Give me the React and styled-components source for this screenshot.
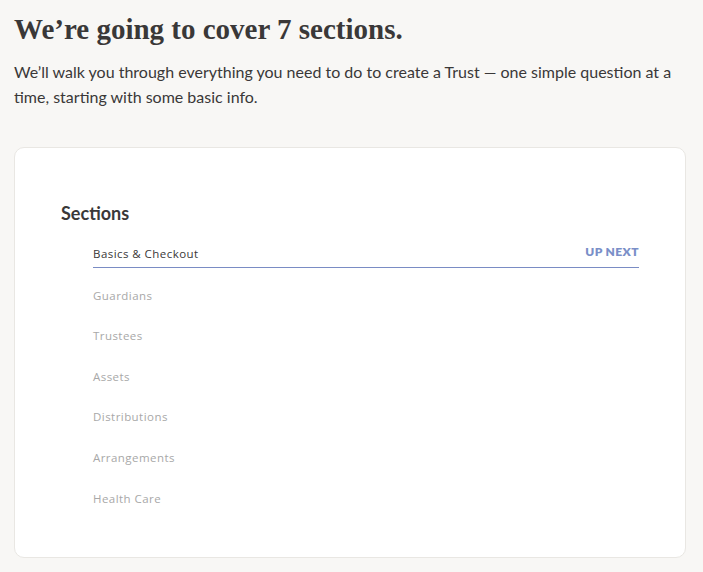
import React from "react";
import styled, { createGlobalStyle } from "styled-components";

const Global = createGlobalStyle`
  html, body { margin: 0; padding: 0; background: #f8f7f5; }
  body { font-family: Lato, "Liberation Sans", sans-serif; color: #3a3838; }
`;

const Page = styled.div`
  padding: 12px 17px 15px 14px;
  box-sizing: border-box;
  width: 703px;
`;

const Title = styled.h1`
  margin: 0;
  font-family: "Liberation Serif", serif;
  font-weight: 700;
  font-size: 29px;
  line-height: 34px;
  color: #3a3838;
`;

const Intro = styled.p`
  margin: 13px 0 0;
  font-size: 16px;
  line-height: 25px;
  color: #3a3838;
`;

const Card = styled.section`
  margin-top: 38px;
  background: #fff;
  border: 1px solid #e9e7e3;
  border-radius: 10px;
  padding: 53px 46px 45px 46px;
`;

const CardTitle = styled.h2`
  margin: 0;
  font-family: Lato, sans-serif;
  font-weight: 700;
  font-size: 18px;
  line-height: 24px;
  color: #3a3838;
`;

const List = styled.ul`
  list-style: none;
  margin: 9px 0 0;
  padding: 0 0 0 32px;
`;

const Item = styled.li`
  display: flex;
  justify-content: space-between;
  align-items: flex-end;
  height: 40.6px;
  box-sizing: border-box;
  padding-bottom: 5px;
  font-family: "Open Sans", sans-serif;
  font-size: 11.5px;
  letter-spacing: 0.45px;
  color: ${(p) => (p.$active ? "#3a3838" : "#a8a8a8")};
  border-bottom: 1px solid ${(p) => (p.$active ? "#7a8cc4" : "transparent")};
  &:first-child {
    height: 34px;
    padding-bottom: 6px;
  }
`;

const Badge = styled.span`
  font-family: Lato, sans-serif;
  font-weight: 800;
  font-size: 12px;
  letter-spacing: 0.4px;
  color: #7a8fc8;
  padding-bottom: 2px;
`;

const sections = [
  "Basics & Checkout",
  "Guardians",
  "Trustees",
  "Assets",
  "Distributions",
  "Arrangements",
  "Health Care",
];

export default function App() {
  return (
    <>
      <Global />
      <Page>
        <Title>We’re going to cover 7 sections.</Title>
        <Intro>
          We’ll walk you through everything you need to do to create a Trust — one simple question at a
          time, starting with some basic info.
        </Intro>
        <Card>
          <CardTitle>Sections</CardTitle>
          <List>
            {sections.map((s, i) => (
              <Item key={s} $active={i === 0}>
                <span>{s}</span>
                {i === 0 && <Badge>UP NEXT</Badge>}
              </Item>
            ))}
          </List>
        </Card>
      </Page>
    </>
  );
}
